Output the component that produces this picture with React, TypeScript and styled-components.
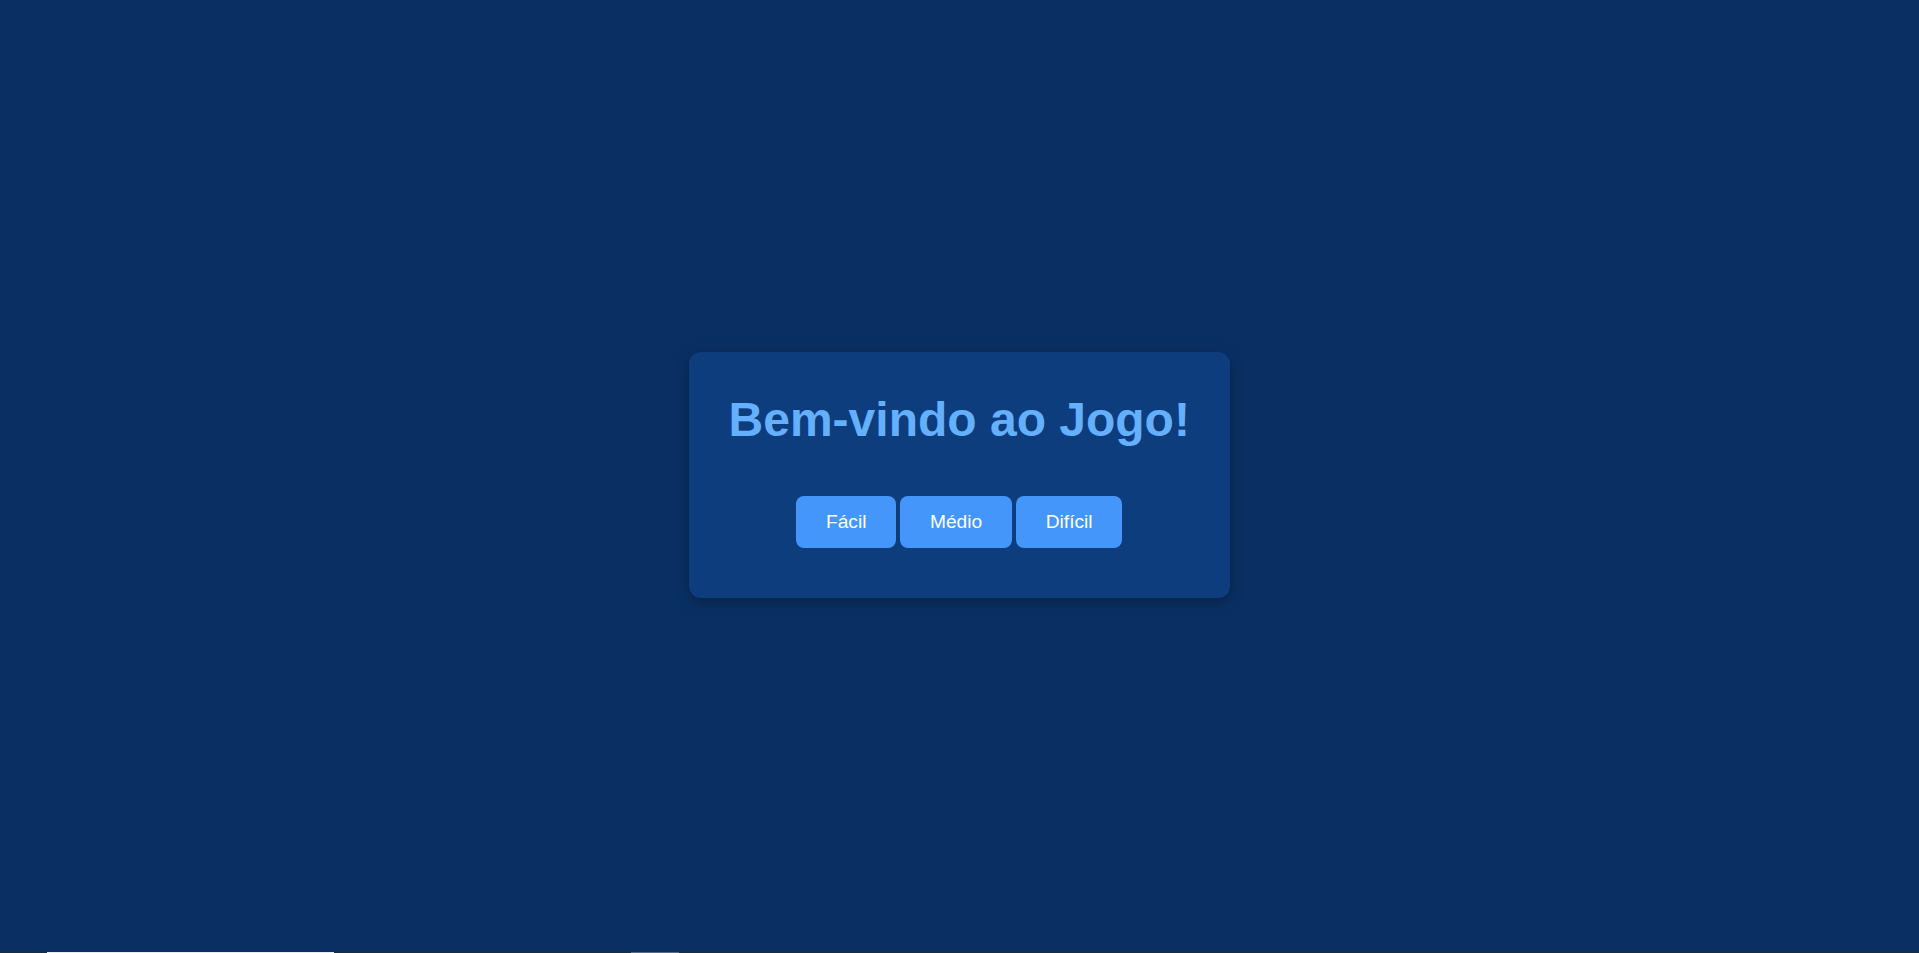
import React from "react";
import styled, { createGlobalStyle } from "styled-components";

const GlobalStyle = createGlobalStyle`
  html, body {
    margin: 0;
    padding: 0;
    height: 100%;
  }
  body {
    background: #0a3063;
    font-family: "Liberation Sans", Arial, sans-serif;
    overflow: hidden;
  }
  #root {
    height: 100%;
  }
`;

const Page = styled.div`
  height: 953px;
  display: flex;
  flex-direction: column;
`;

const Stage = styled.main`
  flex: 1;
  display: flex;
  align-items: center;
  justify-content: center;
  padding-bottom: 2px;
`;

const Card = styled.section`
  background: #0e3d7e;
  border-radius: 12px;
  padding: 40px 40.5px 50px 40px;
  box-shadow: 0 4px 14px rgba(0, 0, 0, 0.3);
  text-align: center;
`;

const Title = styled.h1`
  margin: 0 0 49px;
  font-size: 48px;
  font-weight: bold;
  color: #64b0fc;
  line-height: normal;
  white-space: nowrap;
`;

const ButtonRow = styled.div`
  display: flex;
  justify-content: center;
  gap: 4.5px;
`;

const LevelButton = styled.button`
  background: #4496fa;
  color: #ffffff;
  border: none;
  border-radius: 8px;
  padding: 15px 29.5px;
  font-family: "Liberation Sans", Arial, sans-serif;
  font-size: 19.2px;
  line-height: 22px;
  cursor: pointer;
`;

const BottomStrip = styled.div`
  height: 1px;
  display: flex;
  background: #1a2d3a;
`;

const Segment = styled.div<{ $w: number; $color: string }>`
  width: ${(p) => p.$w}px;
  flex: none;
  background: ${(p) => p.$color};
`;

export default function App() {
  return (
    <>
      <GlobalStyle />
      <Page>
        <Stage>
          <Card>
            <Title>Bem-vindo ao Jogo!</Title>
            <ButtonRow>
              <LevelButton>Fácil</LevelButton>
              <LevelButton>Médio</LevelButton>
              <LevelButton>Difícil</LevelButton>
            </ButtonRow>
          </Card>
        </Stage>
        <BottomStrip>
          <Segment $w={47} $color="#1a2d3a" />
          <Segment $w={287} $color="#e8ecf0" />
          <Segment $w={297} $color="#1a2d3a" />
          <Segment $w={48} $color="#5a6a80" />
        </BottomStrip>
      </Page>
    </>
  );
}
